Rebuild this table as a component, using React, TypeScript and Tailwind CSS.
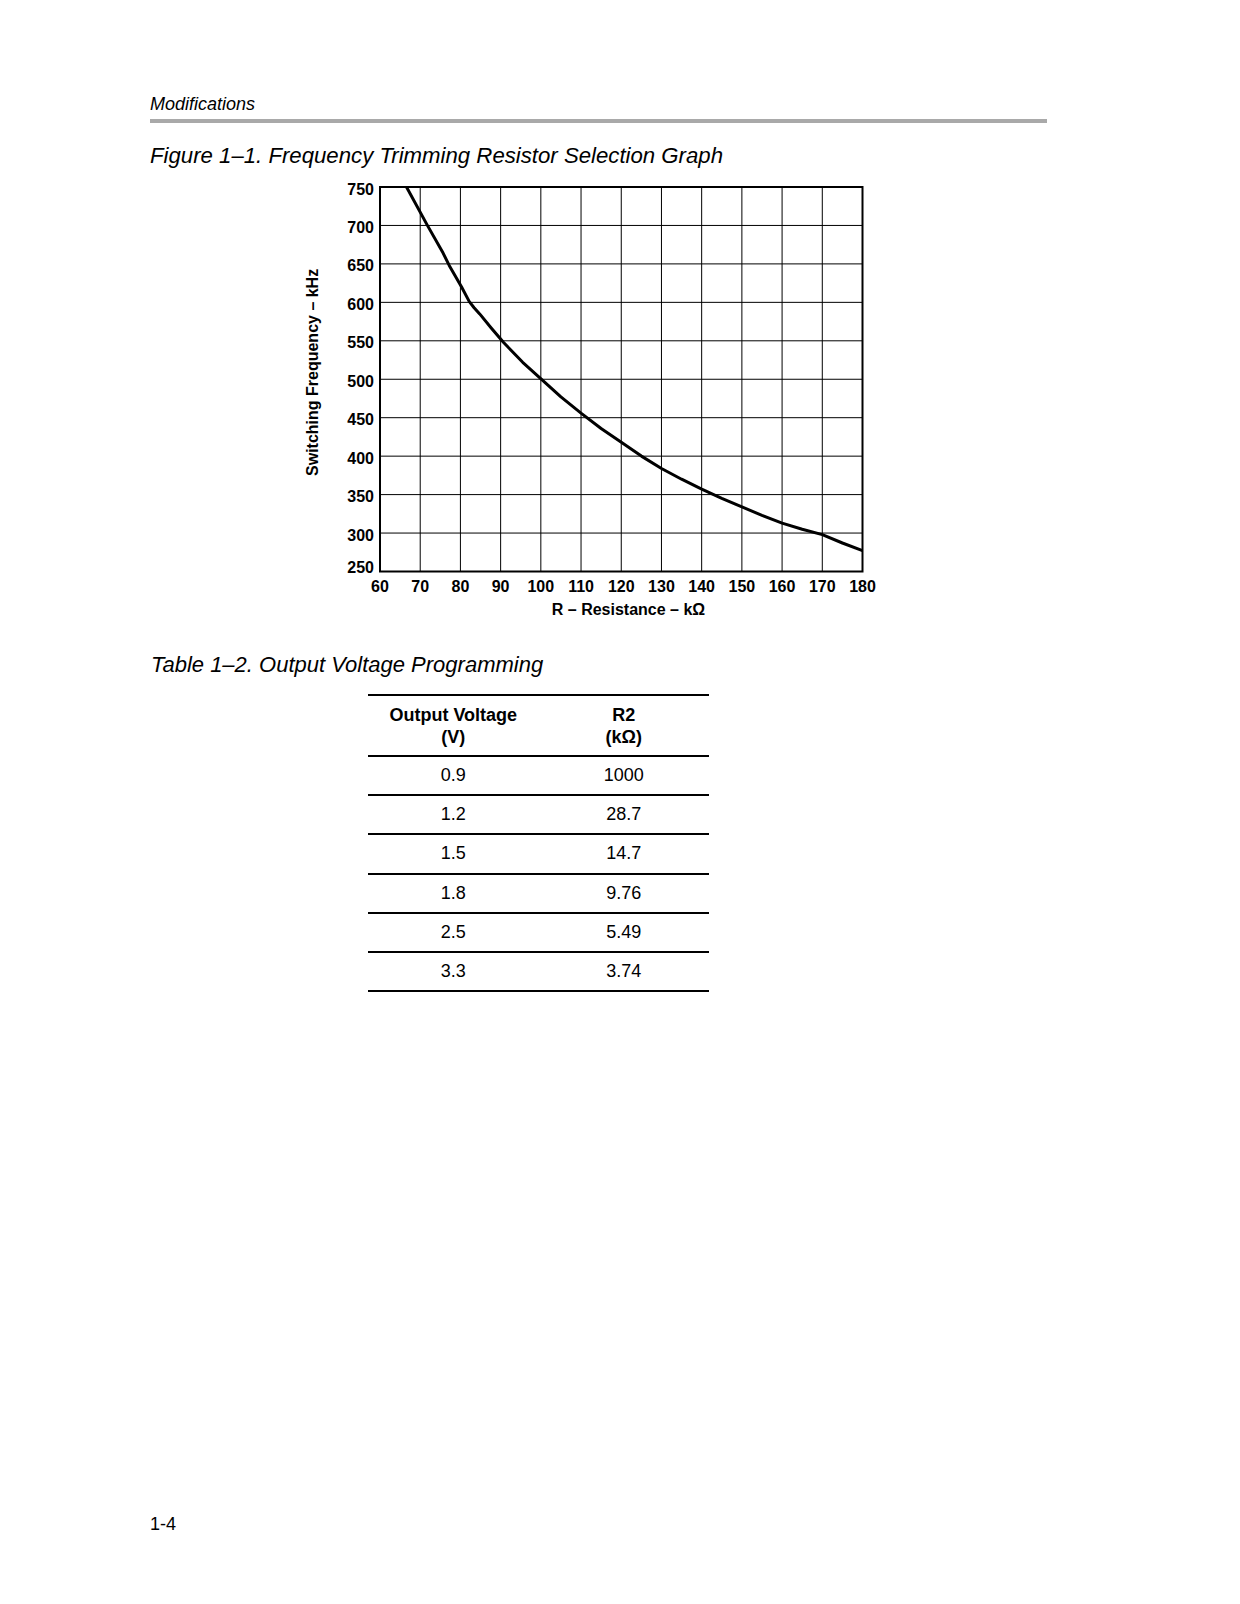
import React from "react";

const X0 = 380;
const X1 = 862.5;
const Y0 = 187;
const Y1 = 571.5;
const xOf = (r: number) => X0 + ((r - 60) / 120) * (X1 - X0);
const yOf = (f: number) => Y0 + ((750 - f) / 500) * (Y1 - Y0);

const curve: [number, number][] = [
  [66.6, 750], [71.8, 700], [75.7, 664], [77.2, 648], [80.3, 620], [82.2, 601],
  [83.4, 593], [84.8, 585], [87.6, 567], [90.7, 548], [95.5, 522], [100.6, 498], [105, 477],
  [110, 456], [115, 436], [120, 418], [125, 400], [130, 384], [135, 370],
  [140, 357], [145, 345], [150, 334], [155, 323], [160, 313], [165, 305],
  [170, 298], [175, 287], [180, 277],
];

const rows: [string, string][] = [
  ["0.9", "1000"],
  ["1.2", "28.7"],
  ["1.5", "14.7"],
  ["1.8", "9.76"],
  ["2.5", "5.49"],
  ["3.3", "3.74"],
];

function Chart() {
  const xs = Array.from({ length: 13 }, (_, i) => 60 + i * 10);
  const ys = Array.from({ length: 11 }, (_, i) => 750 - i * 50);
  const pts = curve.map(([r, f]) => `${xOf(r).toFixed(1)},${yOf(f).toFixed(1)}`).join(" ");
  return (
    <svg
      width={600}
      height={450}
      viewBox="280 175 600 450"
      className="block ml-[280px] mt-[6px]"
      style={{ fontFamily: '"Liberation Sans", Arial, sans-serif' }}
    >
      {xs.slice(1, -1).map((r) => (
        <line key={"v" + r} x1={xOf(r)} x2={xOf(r)} y1={Y0} y2={Y1} stroke="#000" strokeWidth={1} />
      ))}
      {ys.slice(1, -1).map((f) => (
        <line key={"h" + f} x1={X0} x2={X1} y1={yOf(f)} y2={yOf(f)} stroke="#000" strokeWidth={1} />
      ))}
      <rect x={X0} y={Y0} width={X1 - X0} height={Y1 - Y0} fill="none" stroke="#000" strokeWidth={2} />
      <polyline points={pts} fill="none" stroke="#000" strokeWidth={3} strokeLinejoin="round" strokeLinecap="butt" />
      {ys.map((f) => (
        <text key={"yl" + f} x={374} y={yOf(f) + 7.5 - (f === 250 ? 6 : 0)} textAnchor="end" fontSize={16} fontWeight={700} fill="#000">
          {f}
        </text>
      ))}
      {xs.map((r) => (
        <text key={"xl" + r} x={xOf(r)} y={591.5} textAnchor="middle" fontSize={16} fontWeight={700} fill="#000">
          {r}
        </text>
      ))}
      <text x={628.5} y={614.7} textAnchor="middle" fontSize={16} fontWeight={700} fill="#000">
        R – Resistance – kΩ
      </text>
      <text transform="translate(318 372.4) rotate(-90)" x={0} y={0} textAnchor="middle" fontSize={16} fontWeight={700} fill="#000">
        Switching Frequency – kHz
      </text>
    </svg>
  );
}

export default function App() {
  return (
    <div className="w-[1240px] h-[1604px] bg-white text-black overflow-hidden font-['Liberation_Sans',Arial,sans-serif]">
      <div className="pt-[93px] pl-[150px] text-[18px] leading-[22px] italic h-[115px]">Modifications</div>
      <div className="ml-[150px] mt-[4px] w-[897px] h-[4px] bg-[#a9a9a9]" />
      <div className="ml-[150px] mt-[20px] text-[22.2px] leading-[26px] italic">
        Figure 1–1. Frequency Trimming Resistor Selection Graph
      </div>
      <Chart />
      <div className="ml-[151px] mt-[27px] text-[22px] leading-[26px] italic">
        Table 1–2. Output Voltage Programming
      </div>
      <div className="ml-[368px] mt-[16px] w-[341px] border-t-2 border-black">
        <div className="grid grid-cols-2 h-[61px] border-b-2 border-black items-center text-[18px] leading-[22px] font-bold text-center">
          <div>
            Output Voltage
            <br />
            (V)
          </div>
          <div>
            R2
            <br />
            (kΩ)
          </div>
        </div>
        {rows.map(([v, r]) => (
          <div key={v} className="grid grid-cols-2 h-[39.2px] border-b-2 border-black items-center text-[18px] text-center">
            <div>{v}</div>
            <div>{r}</div>
          </div>
        ))}
      </div>
      <div className="ml-[150px] mt-[521px] text-[18px] leading-[22px]">1-4</div>
    </div>
  );
}
